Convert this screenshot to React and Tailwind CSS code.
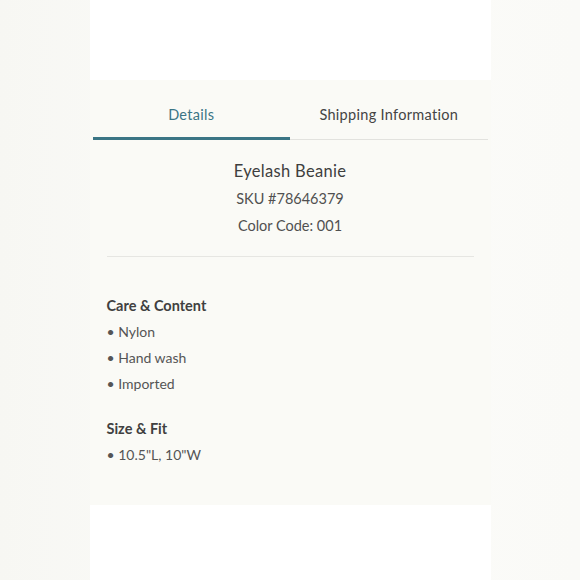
import { useState } from 'react';

const tabs = ['Details', 'Shipping Information'];

const sections = [
  { title: 'Care & Content', items: ['Nylon', 'Hand wash', 'Imported'] },
  { title: 'Size & Fit', items: ['10.5"L, 10"W'] },
];

const App = () => {
  const [active, setActive] = useState('Details');

  return (
    <div
      className="w-[580px] h-[580px] flex justify-center bg-gradient-to-r from-[#f7f7f3] via-[#fcfcfa] to-[#fafaf7] text-[#4a4a4a]"
      style={{ fontFamily: 'Lato, "Open Sans", sans-serif' }}
    >
      <div className="w-[401px] flex flex-col">
        <div className="h-[80px] bg-white" />

        <div className="h-[425px] bg-[#fafaf6] px-[3px]">
          {/* tabs */}
          <div className="flex border-b border-[#e2e2de]">
            {tabs.map((tab) => (
              <button
                key={tab}
                onClick={() => setActive(tab)}
                className={`flex-1 pt-[25px] pb-[12px] text-[14.5px] leading-[20px] tracking-[0.3px] border-b-[3px] -mb-[1px] ${
                  active === tab
                    ? 'text-[#3b7585] border-[#3b7585]'
                    : 'text-[#444] border-transparent'
                }`}
              >
                {tab}
              </button>
            ))}
          </div>

          <div className="px-[14px]">
            <div className="pt-[18px] pb-[17px] text-center border-b border-[#e6e6e2]">
              <h2 className="text-[16.5px] leading-[27px] tracking-[0.3px] text-[#3e3e3e]">Eyelash Beanie</h2>
              <p className="text-[14.5px] leading-[27px] text-[#505050]">SKU #78646379</p>
              <p className="text-[14.5px] leading-[27px] text-[#505050]">Color Code: 001</p>
            </div>

            <div className="pt-[36px]">
              {sections.map((section, i) => (
                <div key={section.title} className={i > 0 ? 'mt-[19px]' : ''}>
                  <h3 className="text-[14.5px] leading-[26px] font-bold text-[#404040]">{section.title}</h3>
                  <ul>
                    {section.items.map((item) => (
                      <li key={item} className="text-[14px] leading-[26px] text-[#555]">
                        • {item}
                      </li>
                    ))}
                  </ul>
                </div>
              ))}
            </div>
          </div>
        </div>

        <div className="flex-1 bg-white" />
      </div>
    </div>
  );
};

export default App;
